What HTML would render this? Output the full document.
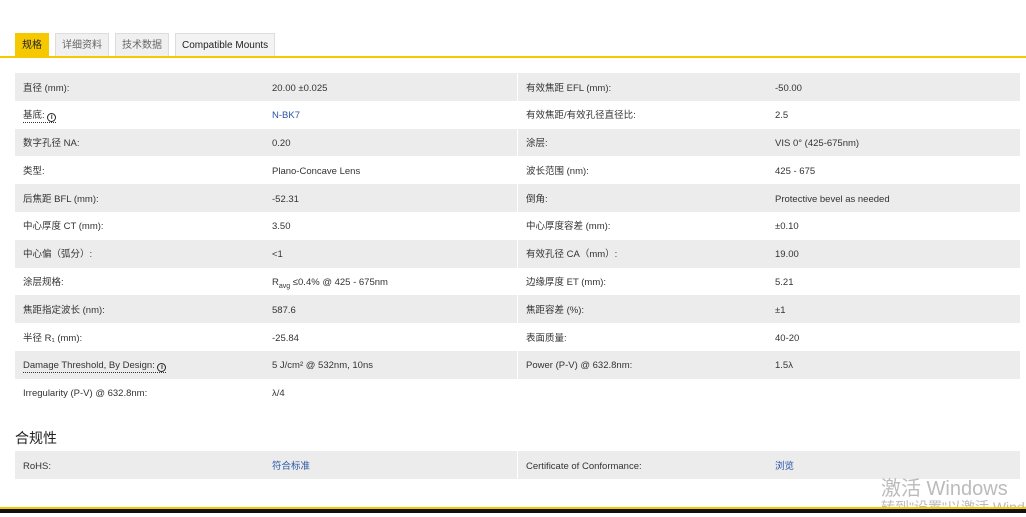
<!DOCTYPE html>
<html><head><meta charset="utf-8"><style>
*{margin:0;padding:0;box-sizing:border-box}
body{width:1026px;height:513px;background:#fff;font-family:"Liberation Sans","Noto Sans CJK SC",sans-serif;font-size:9.5px;color:#333;position:relative;overflow:hidden}
.tabs{position:absolute;top:33px;left:15px;height:24px;display:flex}
.tab{height:24px;line-height:24px;padding:0 6px;margin-right:6px;background:#f0f0f0;border:1px solid #ddd;border-bottom:none;color:#666;font-size:10px}
.tab.a{background:#f5c800;border-color:#f5c800;color:#222}
.tab.c{color:#222;background:#f3f3f3}
.yl{position:absolute;top:56px;left:0;width:1026px;height:2px;background:#f5c800}
.t{position:absolute;width:502px}
.r{height:27.8px;line-height:27.8px;white-space:nowrap;position:relative;overflow:hidden}
.r.s{background:#ececec}
.r span.a{position:absolute;left:8px;top:1.5px}
.r span.b{position:absolute;left:257px;top:1.5px}
.lnk{color:#2a55a5}
.u{border-bottom:1px dotted #333;line-height:11px;display:inline-block}
.i{display:inline-block;width:9px;height:9px;border:1.3px solid #222;border-radius:50%;font-size:7px;line-height:7px;text-align:center;font-weight:bold;vertical-align:-1px}
sub{font-size:7px;line-height:0}
h3{position:absolute;left:15px;top:428px;font-size:14px;font-weight:normal;color:#222}
.bot{position:absolute;left:0;top:507px;width:1026px;height:2px;background:#f5c800}
.blk{position:absolute;left:0;top:509px;width:1026px;height:4px;background:#111}
.wm{position:absolute;left:881px;top:472px;font-size:20px;color:#bbb;white-space:nowrap}
.wm2{position:absolute;left:881px;top:497px;font-size:14px;color:#bbb;white-space:nowrap}
</style></head><body>
<div class="tabs"><div class="tab a">规格</div><div class="tab">详细资料</div><div class="tab">技术数据</div><div class="tab c">Compatible Mounts</div></div>
<div class="yl"></div>
<div class="t" style="left:15px;top:73px">
<div class="r s"><span class="a">直径 (mm):</span><span class="b">20.00 ±0.025</span></div>
<div class="r"><span class="a"><span class="u">基底: <span class="i">i</span></span></span><span class="b lnk">N-BK7</span></div>
<div class="r s"><span class="a">数字孔径 NA:</span><span class="b">0.20</span></div>
<div class="r"><span class="a">类型:</span><span class="b">Plano-Concave Lens</span></div>
<div class="r s"><span class="a">后焦距 BFL (mm):</span><span class="b">-52.31</span></div>
<div class="r"><span class="a">中心厚度 CT (mm):</span><span class="b">3.50</span></div>
<div class="r s"><span class="a">中心偏（弧分）:</span><span class="b">&lt;1</span></div>
<div class="r"><span class="a">涂层规格:</span><span class="b">R<sub>avg</sub> ≤0.4% @ 425 - 675nm</span></div>
<div class="r s"><span class="a">焦距指定波长 (nm):</span><span class="b">587.6</span></div>
<div class="r"><span class="a">半径 R₁ (mm):</span><span class="b">-25.84</span></div>
<div class="r s"><span class="a"><span class="u">Damage Threshold, By Design: <span class="i">i</span></span></span><span class="b">5 J/cm² @ 532nm, 10ns</span></div>
<div class="r"><span class="a">Irregularity (P-V) @ 632.8nm:</span><span class="b">λ/4</span></div>
</div>
<div class="t" style="left:518px;top:73px">
<div class="r s"><span class="a">有效焦距 EFL (mm):</span><span class="b">-50.00</span></div>
<div class="r"><span class="a">有效焦距/有效孔径直径比:</span><span class="b">2.5</span></div>
<div class="r s"><span class="a">涂层:</span><span class="b">VIS 0° (425-675nm)</span></div>
<div class="r"><span class="a">波长范围 (nm):</span><span class="b">425 - 675</span></div>
<div class="r s"><span class="a">倒角:</span><span class="b">Protective bevel as needed</span></div>
<div class="r"><span class="a">中心厚度容差 (mm):</span><span class="b">±0.10</span></div>
<div class="r s"><span class="a">有效孔径 CA（mm）:</span><span class="b">19.00</span></div>
<div class="r"><span class="a">边缘厚度 ET (mm):</span><span class="b">5.21</span></div>
<div class="r s"><span class="a">焦距容差 (%):</span><span class="b">±1</span></div>
<div class="r"><span class="a">表面质量:</span><span class="b">40-20</span></div>
<div class="r s"><span class="a">Power (P-V) @ 632.8nm:</span><span class="b">1.5λ</span></div>
</div>
<h3>合规性</h3>
<div class="t" style="left:15px;top:451px"><div class="r s"><span class="a">RoHS:</span><span class="b lnk">符合标准</span></div></div>
<div class="t" style="left:518px;top:451px"><div class="r s"><span class="a">Certificate of Conformance:</span><span class="b lnk">浏览</span></div></div>
<div class="wm">激活 Windows</div><div class="wm2">转到"设置"以激活 Windows</div>
<div class="bot"></div><div class="blk"></div>
</body></html>
